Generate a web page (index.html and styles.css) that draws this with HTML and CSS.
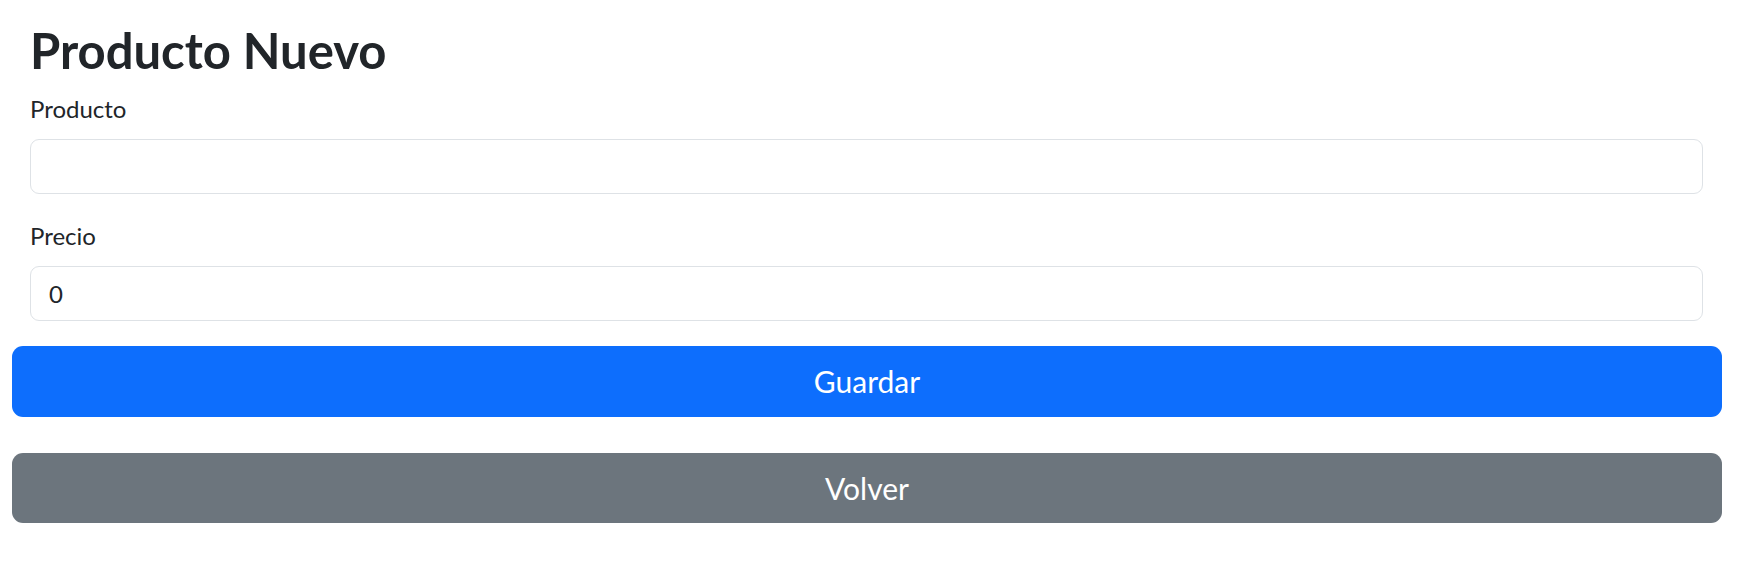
FILE: index.html
```html
<!DOCTYPE html>
<html lang="es">
<head>
<meta charset="utf-8">
<title>Producto Nuevo</title>
<link rel="stylesheet" href="styles.css">
</head>
<body>
<div class="page">
  <form class="form">
    <div class="fields">
      <h1 class="title">Producto Nuevo</h1>
      <div class="group">
        <label class="label" for="producto">Producto</label>
        <input class="control" id="producto" type="text">
      </div>
      <div class="group">
        <label class="label" for="precio">Precio</label>
        <input class="control" id="precio" type="text" value="0">
      </div>
    </div>
    <button class="btn btn-primary" type="button">Guardar</button>
    <button class="btn btn-secondary" type="button">Volver</button>
  </form>
</div>
</body>
</html>
```

FILE: styles.css
```css
* { box-sizing: border-box; }
html, body { margin: 0; padding: 0; background: #fff; }
body {
  font-family: "Lato", "Noto Sans", sans-serif;
  color: #212529;
  font-size: 24px;
  line-height: 1.5;
}
.page {
  padding: 21px 34px 0 12px;
}
.form {
  display: flex;
  flex-direction: column;
}
.fields {
  padding: 0 19px 0 18px;
}
.title {
  margin: 0 0 11px 0;
  font-size: 49px;
  font-weight: 700;
  line-height: 1.2;
}
.group {
  margin-bottom: 24px;
}
.group:last-child { margin-bottom: 25px; }
.label {
  display: block;
  margin-bottom: 12px;
}
.control {
  display: block;
  width: 100%;
  height: 55px;
  padding: 0 18px;
  font: inherit;
  color: #212529;
  border: 1.5px solid #dee2e6;
  border-radius: 9px;
  background: #fff;
}
.btn {
  display: block;
  width: 100%;
  height: 71px;
  border: 0;
  border-radius: 11px;
  color: #fff;
  font-family: inherit;
  font-size: 30px;
  text-align: center;
}
.btn-primary { background: #0d6efd; margin-bottom: 36px; }
.btn-secondary { background: #6c757d; height: 70px; }
```
